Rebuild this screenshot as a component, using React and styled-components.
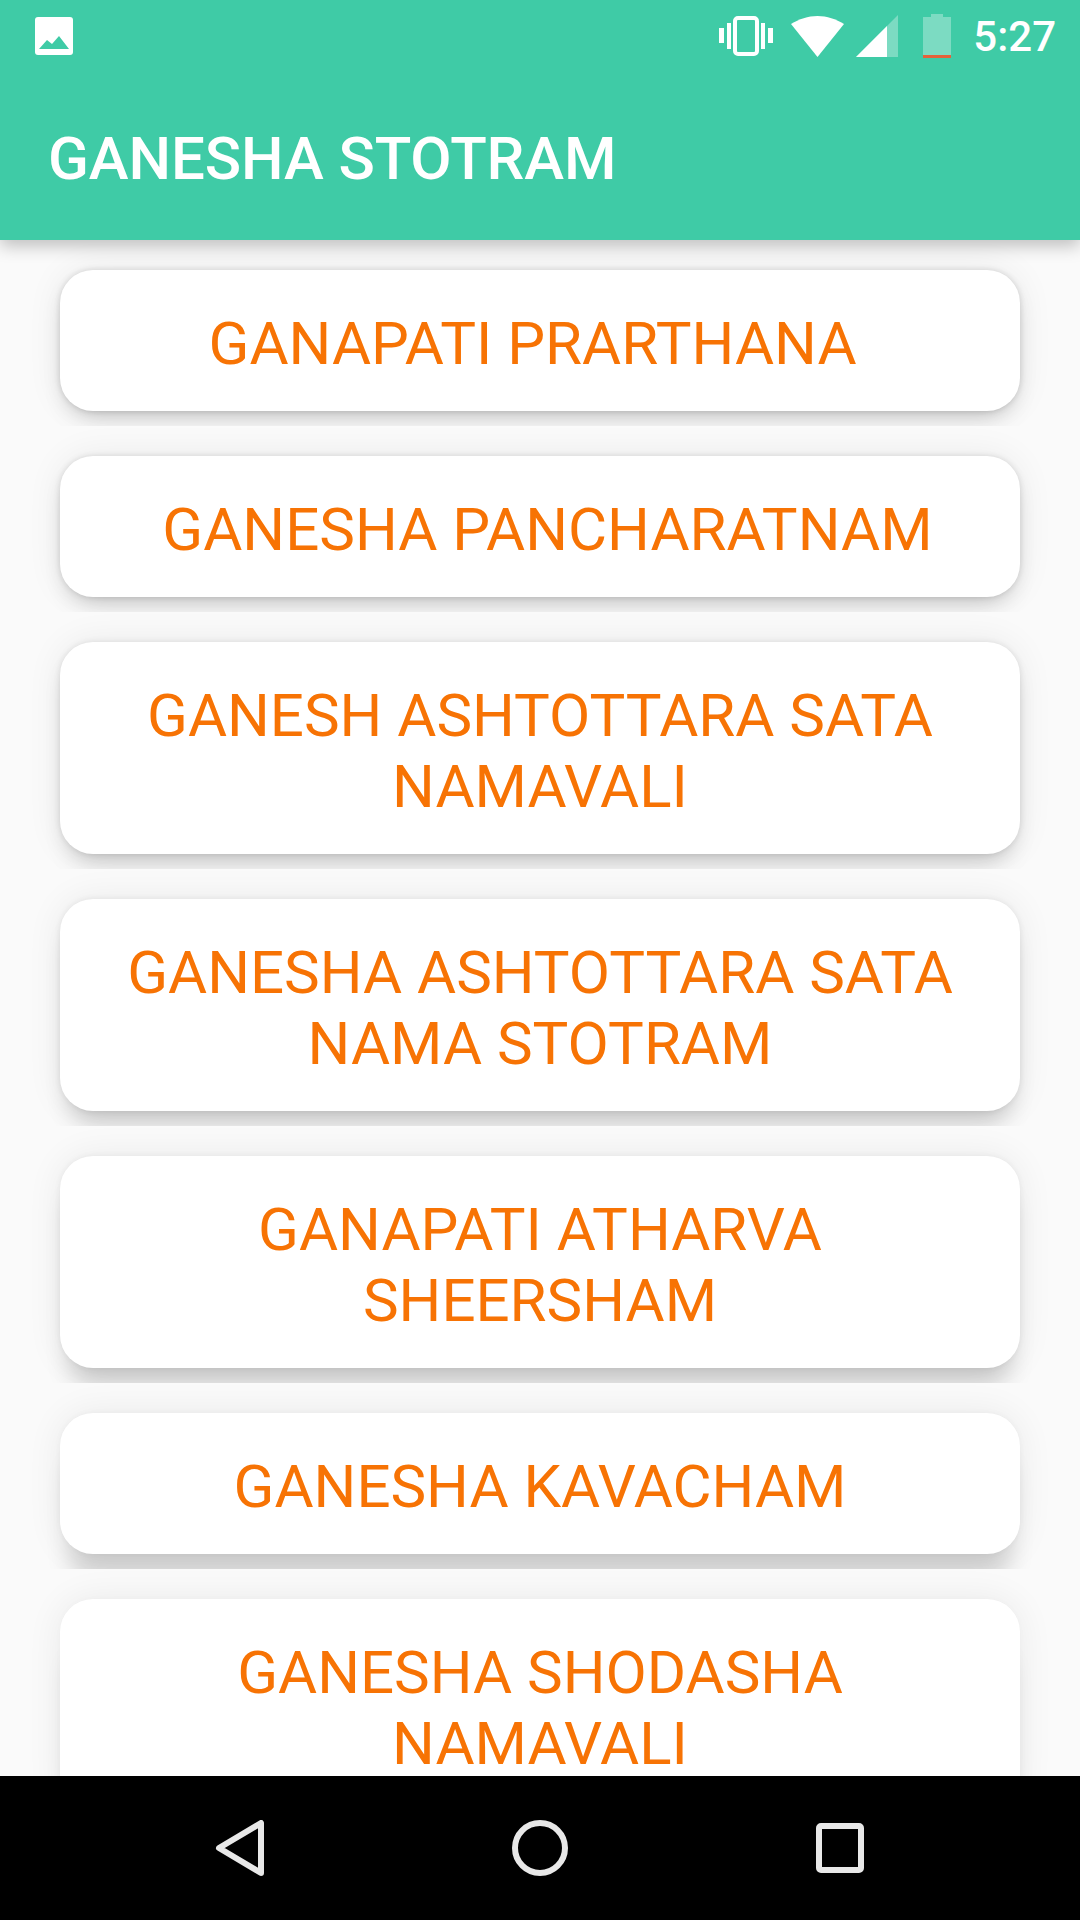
import React from 'react'
import styled, { createGlobalStyle } from 'styled-components'

const GlobalStyle = createGlobalStyle`
  html, body {
    margin: 0;
    padding: 0;
    background: #fafafa;
  }
`

const Screen = styled.div`
  width: 1080px;
  height: 1920px;
  display: flex;
  flex-direction: column;
  overflow: hidden;
  background: #fafafa;
  font-family: Roboto, "Liberation Sans", sans-serif;
`

const Header = styled.header`
  position: relative;
  z-index: 2;
  flex: none;
  background: #3fcba6;
  box-shadow: 0 6px 16px rgba(0, 0, 0, 0.24);
`

const StatusBar = styled.div`
  height: 72px;
  display: flex;
  align-items: center;
  justify-content: space-between;
  padding: 0 24px 0 35px;
`

const StatusIcons = styled.div`
  display: flex;
  align-items: center;
`

const Clock = styled.span`
  margin-left: 22px;
  color: #fff;
  font-size: 42px;
  font-weight: 500;
`

const Toolbar = styled.div`
  height: 168px;
  box-sizing: border-box;
  display: flex;
  align-items: center;
  padding: 4px 48px 0;
  color: #fff;
  font-size: 60px;
  font-weight: 500;
  letter-spacing: -0.1px;
`

const List = styled.main`
  flex: 1;
  min-height: 0;
  overflow: hidden;
  padding-top: 30px;
  display: flex;
  flex-direction: column;
  gap: 45px;
`

// the shadow drops further and gets paler the lower the card sits, and stops 15px under it
const Item = styled.button`
  flex: none;
  width: 960px;
  margin: 0 60px;
  box-sizing: border-box;
  padding: 38px 60px 32px;
  border: 0;
  border-radius: 33px;
  background: #fff;
  color: #f77304;
  font-family: inherit;
  font-size: 60px;
  line-height: 71px;
  text-align: center;
  white-space: ${props => (props.$keepSpaces ? 'break-spaces' : 'normal')};
  box-shadow: 0 ${props => 12 + props.$index * props.$index * 0.9}px 24px -10px rgba(0, 0, 0, ${props => 0.26 - props.$index * 0.02}),
    0 0 36px rgba(0, 0, 0, 0.07),
    0 0 6px rgba(0, 0, 0, ${props => 0.14 - props.$index * 0.02});
  clip-path: inset(-40px -40px -15px -40px);
`

const NavBar = styled.nav`
  position: relative;
  z-index: 2;
  flex: none;
  height: 144px;
  display: flex;
  align-items: center;
  justify-content: center;
  background: #000;
`

const NavButton = styled.div`
  width: 300px;
  display: flex;
  justify-content: center;
`

const Glyph = styled.svg`
  display: block;
  margin-left: ${props => props.$left || 0}px;
`

const ImageIcon = () => (
  <Glyph width="38" height="38" viewBox="0 0 38 38">
    <path fill="#fff" d="M3 0h32a3 3 0 0 1 3 3v32a3 3 0 0 1-3 3H3a3 3 0 0 1-3-3V3a3 3 0 0 1 3-3z" />
    <path fill="#3fcba6" d="M4 32l8-9 5 4 7-8 10 13z" />
  </Glyph>
)

const VibrateIcon = () => (
  <Glyph width="54" height="40" viewBox="0 0 54 40" fill="#fff">
    <rect x="0" y="12" width="5" height="15" />
    <rect x="8" y="7" width="4" height="26" />
    <rect x="42" y="7" width="4" height="26" />
    <rect x="49" y="12" width="5" height="15" />
    <rect x="16" y="2" width="22" height="36" rx="3" fill="none" stroke="#fff" strokeWidth="4" />
  </Glyph>
)

const WifiIcon = () => (
  <Glyph $left={18} width="53" height="41" viewBox="0 0 53 41">
    <path fill="#fff" d="M26.5 41L0 8C8 3 17 0 26.5 0S45 3 53 8z" />
  </Glyph>
)

const SignalIcon = () => (
  <Glyph $left={12} width="42" height="42" viewBox="0 0 42 42">
    <path fill="#fff" fillOpacity="0.32" d="M42 0v42H0z" />
    <path fill="#fff" d="M31 11v31H0z" />
  </Glyph>
)

const BatteryIcon = () => (
  <Glyph $left={25} width="28" height="44" viewBox="0 0 28 44">
    <path fill="#fff" fillOpacity="0.32" d="M8 0h12v3h8v38H0V3h8z" />
    <rect x="0" y="41" width="28" height="3" fill="#e4633a" />
  </Glyph>
)

const BackIcon = () => (
  <Glyph width="50" height="56" viewBox="0 0 50 56">
    <path fill="none" stroke="#e8e8e8" strokeWidth="6" strokeLinejoin="round" d="M46 3v50L4 28z" />
  </Glyph>
)

const HomeIcon = () => (
  <Glyph width="56" height="56" viewBox="0 0 56 56">
    <circle cx="28" cy="28" r="25" fill="none" stroke="#e8e8e8" strokeWidth="6" />
  </Glyph>
)

const RecentIcon = () => (
  <Glyph width="48" height="50" viewBox="0 0 48 50">
    <rect x="3" y="3" width="42" height="44" rx="2" fill="none" stroke="#e8e8e8" strokeWidth="6" />
  </Glyph>
)

// the spaces at the ends are in the titles, they push the text off centre
const stotrams = [
  'GANAPATI PRARTHANA ',
  ' GANESHA PANCHARATNAM',
  'GANESH ASHTOTTARA SATA NAMAVALI',
  'GANESHA ASHTOTTARA SATA NAMA STOTRAM',
  'GANAPATI ATHARVA SHEERSHAM',
  'GANESHA KAVACHAM',
  'GANESHA SHODASHA NAMAVALI',
]

export default function App() {
  return (
    <Screen>
      <GlobalStyle />
      <Header>
        <StatusBar>
          <ImageIcon />
          <StatusIcons>
            <VibrateIcon />
            <WifiIcon />
            <SignalIcon />
            <BatteryIcon />
            <Clock>5:27</Clock>
          </StatusIcons>
        </StatusBar>
        <Toolbar>GANESHA STOTRAM</Toolbar>
      </Header>
      <List>
        {stotrams.map((name, i) => (
          <Item key={name} $index={i} $keepSpaces={name !== name.trim()}>
            {name}
          </Item>
        ))}
      </List>
      <NavBar>
        <NavButton>
          <BackIcon />
        </NavButton>
        <NavButton>
          <HomeIcon />
        </NavButton>
        <NavButton>
          <RecentIcon />
        </NavButton>
      </NavBar>
    </Screen>
  )
}
